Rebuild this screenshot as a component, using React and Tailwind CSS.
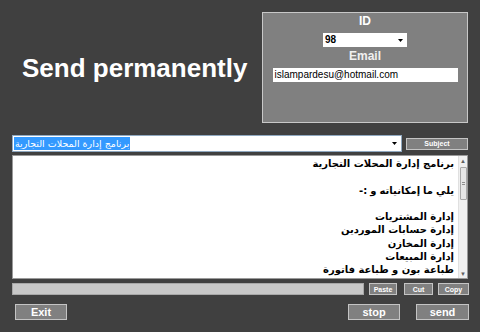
import React from 'react'

const lines = [
  'برنامج إدارة المحلات التجارية',
  '',
  null,
  '',
  'إدارة المشتريات',
  'إدارة حسابات الموردين',
  'إدارة المخازن',
  'إدارة المبيعات',
  'طباعة بون و طباعة فاتورة',
]

function Btn({ label, className = '' }) {
  return (
    <button className={`flex items-center justify-center bg-[#808080] border border-[#c4c4c4] text-white font-bold leading-none ${className}`}>
      {label}
    </button>
  )
}

function Arrow() {
  return (
    <svg width="5" height="3" viewBox="0 0 5 3" className="shrink-0">
      <path d="M0 0h5L2.5 3z" fill="#000" />
    </svg>
  )
}

export default function App() {
  return (
    <div className="w-[480px] h-[332px] bg-[#404040] overflow-hidden font-['Liberation_Sans',Arial,sans-serif]">
      {/* header */}
      <div className="flex pt-[12px] h-[135px]">
        <div className="pl-[22px] pt-[41px] text-white font-bold text-[26px] leading-[30px] whitespace-nowrap">
          Send permanently
        </div>
        <div className="ml-auto mr-[12px] w-[206px] h-[111px] bg-[#808080] border border-[#c8c8c8] flex flex-col items-center">
          <div className="text-white font-bold text-[12px] leading-[14px] mt-[1px]">ID</div>
          <div className="mt-[5px] w-[84px] h-[14px] bg-white flex items-center justify-between px-[2px] pr-[4px]">
            <span className="text-black font-bold text-[10px] leading-none">98</span>
            <Arrow />
          </div>
          <div className="text-[#f0f0f0] font-bold text-[12px] leading-[14px] mt-[2px]">Email</div>
          <div className="mt-[5px] w-[185px] h-[14px] bg-white flex items-center px-[2px]">
            <span className="text-black text-[10px] leading-none">islampardesu@hotmail.com</span>
          </div>
        </div>
      </div>

      {/* subject row */}
      <div className="flex items-center ml-[12px] h-[17px]">
        <div className="w-[390px] h-[17px] bg-white border border-[#8fa8c0] flex items-center justify-between pl-[1px] pr-[4px]">
          <span dir="rtl" className="bg-[#3399ff] text-white text-[9.5px] leading-[13px] px-[1px] font-['DejaVu_Sans',sans-serif]">
            برنامج إدارة المحلات التجارية
          </span>
          <Arrow />
        </div>
        <Btn label="Subject" className="ml-[4px] w-[62px] h-[12px] text-[7px] text-[#e8e8e8]" />
      </div>

      {/* body text */}
      <div className="ml-[12px] mt-[3px] w-[456px] h-[124px] bg-white border border-[#9a9a9a] flex">
        <div dir="rtl" className="flex-1 pr-[4px] pt-[1px] text-black font-bold text-[10px] leading-[13.3px] font-['DejaVu_Sans',sans-serif]">
          {lines.map((l, i) =>
            l === null ? (
              <div key={i} dir="ltr" className="h-[13.3px] flex justify-end gap-[3px] whitespace-nowrap">
                <span>-:</span>
                <span>و</span>
                <span>إمكانياته</span>
                <span>ما</span>
                <span>يلي</span>
              </div>
            ) : (
              <div key={i} className="h-[13.3px] whitespace-nowrap">{l}</div>
            )
          )}
        </div>
        <div className="w-[9px] bg-[#f0f0f0] border-l border-[#e0e0e0] flex flex-col items-center">
          <div className="h-[9px] flex items-center justify-center text-[6px] text-[#606060] leading-none">▲</div>
          <div className="w-[7px] h-[33px] mt-[2px] bg-[#e6e6e6] border border-[#a8a8a8] rounded-[1px] flex items-center justify-center">
            <div className="w-[3px] h-[3px] border-y border-[#909090]" />
          </div>
          <div className="flex-1" />
          <div className="h-[9px] flex items-center justify-center text-[6px] text-[#606060] leading-none">▼</div>
        </div>
      </div>

      {/* progress + clipboard */}
      <div className="flex items-center ml-[12px] mt-[4px] h-[12px]">
        <div className="w-[352px] h-[12px] bg-[#c8c8c8] border border-[#a8a8a8]" />
        <Btn label="Paste" className="ml-[5px] w-[28px] h-[12px] text-[7px] text-[#e8e8e8]" />
        <Btn label="Cut" className="ml-[7px] w-[29px] h-[12px] text-[7px] text-[#e8e8e8]" />
        <Btn label="Copy" className="ml-[5px] w-[31px] h-[12px] text-[7px] text-[#e8e8e8]" />
      </div>

      {/* bottom buttons */}
      <div className="flex items-center mt-[9px] h-[16px]">
        <Btn label="Exit" className="ml-[15px] w-[52px] h-[16px] text-[11px]" />
        <Btn label="stop" className="ml-auto w-[52px] h-[16px] text-[11px]" />
        <Btn label="send" className="ml-[16px] mr-[11px] w-[53px] h-[16px] text-[11px]" />
      </div>
    </div>
  )
}
